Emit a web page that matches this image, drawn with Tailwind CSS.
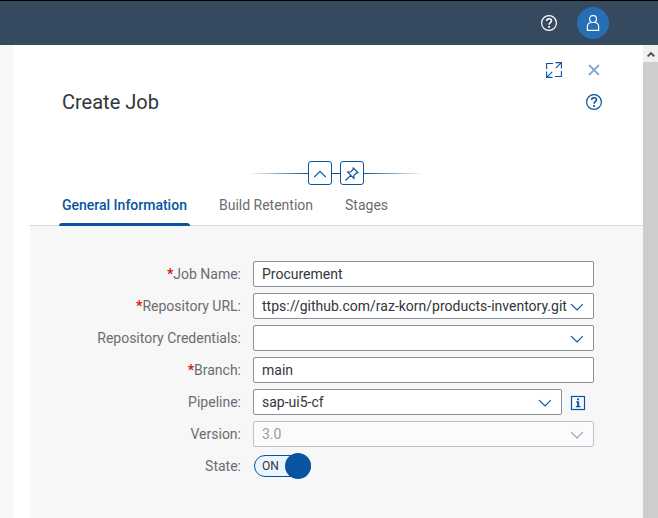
<!DOCTYPE html>
<html lang="en">
<head>
<meta charset="utf-8">
<meta name="viewport" content="width=device-width, initial-scale=1">
<title>Create Job</title>
<script src="https://cdn.jsdelivr.net/npm/@tailwindcss/browser@4"></script>
</head>
<body class="flex h-screen flex-col overflow-hidden bg-[#f7f7f7] font-[Roboto,'Liberation_Sans',sans-serif] text-sm text-[#32363a]">
<header class="flex h-[45px] shrink-0 items-center justify-end gap-5 border-t border-black bg-[#354a5f] pr-[49px]">
  <button type="button" aria-label="Help" class="text-white">
    <svg class="size-4" viewBox="0 0 16 16" fill="none" stroke="currentColor"><circle cx="8" cy="8" r="7.4" stroke-width="1.2"/><path d="M5.6 6C5.6 4.5 6.6 3.7 8.1 3.7C9.6 3.7 10.5 4.6 10.5 5.8C10.5 7.5 8.1 7.7 8.1 9.7" stroke-width="1.5"/><path d="M7.2 11.9H9" stroke-width="1.7"/></svg>
  </button>
  <button type="button" aria-label="User menu" class="flex size-8 items-center justify-center rounded-full bg-[#286eb4] text-white">
    <svg class="size-4" viewBox="0 0 16 16" fill="none" stroke="currentColor" stroke-width="1.2"><rect x="4.6" y=".7" width="6.8" height="6.8" rx="2.9"/><path d="M6 7.5C3.3 7.9 2.4 9.4 2.4 11.6V15.4H13.6V11.6C13.6 9.4 12.7 7.9 10 7.5"/></svg>
  </button>
</header>
<div class="flex min-h-0 flex-1">
  <main class="ml-[14px] flex min-w-0 flex-1 flex-col bg-white pl-4">
    <div class="flex h-[117px] flex-col pt-[17px] pr-[41px] pl-8 text-[#0854a0]">
      <div class="flex justify-end gap-6">
        <button type="button" aria-label="Full screen"><svg class="size-4" viewBox="0 0 16 16" fill="none" stroke="currentColor" stroke-width="1.1"><path d="M.6 7V1.5H7M9.5.6H15.4V6.5M15.4.6L9.8 6.2M15.4 9V14.5H9M.6 9.5V15.4H6.5M.6 15.4L6.2 9.8"/></svg></button>
        <button type="button" aria-label="Close"><svg class="size-4" viewBox="0 0 16 16" fill="none" stroke="#84a9cf" stroke-width="1.8"><path d="M3 3L13 13M13 3L3 13"/></svg></button>
      </div>
      <div class="mt-3 flex items-center justify-between">
        <h1 class="text-xl leading-6 text-[#32363a]">Create Job</h1>
        <button type="button" aria-label="Page help"><svg class="size-4" viewBox="0 0 16 16" fill="none" stroke="currentColor"><circle cx="8" cy="8" r="7.4" stroke-width="1.2"/><path d="M5.6 6C5.6 4.5 6.6 3.7 8.1 3.7C9.6 3.7 10.5 4.6 10.5 5.8C10.5 7.5 8.1 7.7 8.1 9.7" stroke-width="1.5"/><path d="M7.2 11.9H9" stroke-width="1.7"/></svg></button>
      </div>
    </div>
    <div class="-mt-px flex h-6 shrink-0 items-center justify-center pr-px text-[#0854a0]">
      <span class="h-px w-[60px] bg-linear-to-r from-transparent to-[#0854a0]"></span>
      <button type="button" aria-label="Collapse header" class="flex size-6 items-center justify-center rounded-[3px] border border-[#0854a0]"><svg class="mt-0.5 size-4" viewBox="0 0 16 16" fill="none" stroke="currentColor" stroke-width="1.2"><path d="M2.2 11.2L8 5.4L13.8 11.2"/></svg></button>
      <span class="h-px w-2 bg-[#0854a0]"></span>
      <button type="button" aria-label="Pin header" class="flex size-6 items-center justify-center rounded-[3px] border border-[#0854a0]"><svg class="mt-0.5 size-4" viewBox="0 0 16 16" fill="none" stroke="currentColor" stroke-width="1.2"><path d="M9.3 2L14 6.7L12.2 7.1L10 9.4L9.9 12.3L3.7 6.1L6.6 6L8.9 3.8ZM6.7 9.3L1.5 14.5"/></svg></button>
      <span class="h-px w-[60px] bg-linear-to-r from-[#0854a0] to-transparent"></span>
    </div>
    <nav class="flex h-[41px] shrink-0 items-end gap-8 border-b border-[#d9d9d9] pl-8 leading-5 text-[#6a6d70]">
      <a href="#general" aria-current="page" class="-mb-px flex h-[31px] flex-col justify-between font-medium text-[#0854a0]">General Information<span class="-mx-[3px] h-[3px] rounded-t-sm bg-[#0854a0]"></span></a>
      <a href="#retention" class="h-[30px]">Build Retention</a>
      <a href="#stages" class="h-[30px]">Stages</a>
    </nav>
    <form id="general" class="grid flex-1 auto-rows-[26px] grid-cols-[211px_minmax(0,1fr)] items-center gap-x-3 gap-y-[6px] bg-[#f7f7f7] pt-[35px] pr-[49px]">
      <label for="name" class="text-right text-[#6a6d70]"><span class="font-bold text-[#cc1919]">*</span>Job Name:</label>
      <input id="name" required value="Procurement" class="h-full w-full rounded-[2px] border border-[#89919a] bg-white px-2">
      <label for="url" class="text-right text-[#6a6d70]"><span class="font-bold text-[#cc1919]">*</span>Repository URL:</label>
      <div class="flex h-full rounded-[2px] border border-[#89919a] bg-white">
        <input id="url" required value="ttps://github.com/raz-korn/products-inventory.git" class="min-w-0 flex-1 pl-2">
        <button type="button" aria-label="Show repositories" class="mr-2 flex w-4 items-center justify-center text-[#0854a0]"><svg class="size-4" viewBox="0 0 16 16" fill="none" stroke="currentColor" stroke-width="1.2"><path d="M2.2 6.2L8 12L13.8 6.2"/></svg></button>
      </div>
      <label for="cred" class="text-right text-[#6a6d70]">Repository Credentials:</label>
      <div class="grid h-full items-center">
        <select id="cred" class="col-start-1 row-start-1 h-[26px] w-full appearance-none rounded-[2px] border border-[#89919a] bg-white px-2"><option></option></select>
        <svg class="pointer-events-none col-start-1 row-start-1 mr-[9px] size-4 justify-self-end text-[#0854a0]" viewBox="0 0 16 16" fill="none" stroke="currentColor" stroke-width="1.2"><path d="M2.2 6.2L8 12L13.8 6.2"/></svg>
      </div>
      <label for="branch" class="text-right text-[#6a6d70]"><span class="font-bold text-[#cc1919]">*</span>Branch:</label>
      <input id="branch" required value="main" class="h-full w-full rounded-[2px] border border-[#89919a] bg-white px-2">
      <label for="pipe" class="text-right text-[#6a6d70]">Pipeline:</label>
      <div class="flex h-full items-center gap-2 pr-2">
        <div class="grid h-full flex-1 items-center">
          <select id="pipe" class="col-start-1 row-start-1 h-[26px] w-full appearance-none rounded-[2px] border border-[#89919a] bg-white px-2"><option>sap-ui5-cf</option></select>
          <svg class="pointer-events-none col-start-1 row-start-1 mr-[9px] size-4 justify-self-end text-[#0854a0]" viewBox="0 0 16 16" fill="none" stroke="currentColor" stroke-width="1.2"><path d="M2.2 6.2L8 12L13.8 6.2"/></svg>
        </div>
        <button type="button" aria-label="Pipeline information" class="mt-0.5 text-[#0854a0]"><svg class="size-4" viewBox="0 0 16 16" fill="none" stroke="currentColor"><rect x="1.5" y="1.5" width="13" height="13" stroke-width="1.2"/><path d="M7.1 4.4H9.1" stroke-width="1.8"/><path d="M6 7H8.2M5.8 11.6H10.4" stroke-width="1.2"/><path d="M8.2 6.4V12" stroke-width="2"/></svg></button>
      </div>
      <label for="version" class="text-right text-[#6a6d70]">Version:</label>
      <div class="grid h-full items-center">
        <select id="version" disabled class="col-start-1 row-start-1 h-[26px] w-full appearance-none rounded-[2px] border border-[#bfc3c7] bg-[#fbfbfb] px-2 text-[#999b9d] opacity-100"><option>3.0</option></select>
        <svg class="pointer-events-none col-start-1 row-start-1 mr-[9px] size-4 justify-self-end text-[#84a9cf]" viewBox="0 0 16 16" fill="none" stroke="currentColor" stroke-width="1.2"><path d="M2.2 6.2L8 12L13.8 6.2"/></svg>
      </div>
      <label for="state" class="text-right text-[#6a6d70]">State:</label>
      <label class="ml-px flex h-[22px] w-[57px] items-center rounded-full border border-[#0854a0] bg-[#ebf5fe] pl-[7px] text-xs">
        <input id="state" type="checkbox" role="switch" checked class="peer sr-only">
        <span class="flex-1">ON</span>
        <span class="-mr-px size-[26px] rounded-full bg-[#0854a0]"></span>
      </label>
    </form>
  </main>
  <div class="w-[15px] shrink-0 bg-[#cdcdcd]">
    <button type="button" aria-label="Scroll up" class="flex h-[17px] w-full items-center justify-center bg-[#f0f0f0] text-[#505050]"><svg class="size-2" viewBox="0 0 8 8" fill="none" stroke="currentColor" stroke-width="2"><path d="M.7 6.4L4 3.1L7.3 6.4"/></svg></button>
  </div>
</div>
</body>
</html>
